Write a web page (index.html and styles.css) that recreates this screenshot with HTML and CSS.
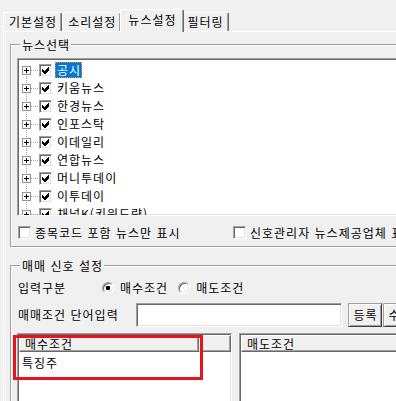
FILE: index.html
```html
<!DOCTYPE html>
<html lang="ko">
  <head>
    <meta charset="utf-8" />
    <title>뉴스설정</title>
<link rel="stylesheet" href="styles.css">
  </head>
  <body>
    <div class="tab-strip">
      <div class="tab">기본설정</div>
      <div class="tab">소리설정</div>
      <div class="tab selected">뉴스설정</div>
      <div class="tab">필터링</div>
    </div>
    <div class="tab-page">
      <div class="group news-group">
        <div class="group-title">뉴스선택</div>
        <div class="tree">
          <div class="tree-row"><span class="expander"></span><span class="dots"></span><span class="check"><svg width="7" height="7" viewBox="0 0 7 7"><path d="M0 2l2 2 4-4h1v3l-4 4h-1l-2-2z"/></svg></span><span class="tree-label selected">공시</span></div>
          <div class="tree-row"><span class="expander"></span><span class="dots"></span><span class="check"><svg width="7" height="7" viewBox="0 0 7 7"><path d="M0 2l2 2 4-4h1v3l-4 4h-1l-2-2z"/></svg></span><span class="tree-label">키움뉴스</span></div>
          <div class="tree-row"><span class="expander"></span><span class="dots"></span><span class="check"><svg width="7" height="7" viewBox="0 0 7 7"><path d="M0 2l2 2 4-4h1v3l-4 4h-1l-2-2z"/></svg></span><span class="tree-label">한경뉴스</span></div>
          <div class="tree-row"><span class="expander"></span><span class="dots"></span><span class="check"><svg width="7" height="7" viewBox="0 0 7 7"><path d="M0 2l2 2 4-4h1v3l-4 4h-1l-2-2z"/></svg></span><span class="tree-label">인포스탁</span></div>
          <div class="tree-row"><span class="expander"></span><span class="dots"></span><span class="check"><svg width="7" height="7" viewBox="0 0 7 7"><path d="M0 2l2 2 4-4h1v3l-4 4h-1l-2-2z"/></svg></span><span class="tree-label">이데일리</span></div>
          <div class="tree-row"><span class="expander"></span><span class="dots"></span><span class="check"><svg width="7" height="7" viewBox="0 0 7 7"><path d="M0 2l2 2 4-4h1v3l-4 4h-1l-2-2z"/></svg></span><span class="tree-label">연합뉴스</span></div>
          <div class="tree-row"><span class="expander"></span><span class="dots"></span><span class="check"><svg width="7" height="7" viewBox="0 0 7 7"><path d="M0 2l2 2 4-4h1v3l-4 4h-1l-2-2z"/></svg></span><span class="tree-label">머니투데이</span></div>
          <div class="tree-row"><span class="expander"></span><span class="dots"></span><span class="check"><svg width="7" height="7" viewBox="0 0 7 7"><path d="M0 2l2 2 4-4h1v3l-4 4h-1l-2-2z"/></svg></span><span class="tree-label">이투데이</span></div>
          <div class="tree-row"><span class="expander"></span><span class="dots"></span><span class="check"><svg width="7" height="7" viewBox="0 0 7 7"><path d="M0 2l2 2 4-4h1v3l-4 4h-1l-2-2z"/></svg></span><span class="tree-label">채널K(키워드량)</span></div>
        </div>
        <div class="option-row">
          <label class="option first"><span class="check"></span>종목코드 포함 뉴스만 표시</label>
          <label class="option"><span class="check"></span>신호관리자 뉴스제공업체 표시</label>
        </div>
      </div>

      <div class="group signal-group">
        <div class="group-title">매매 신호 설정</div>
        <div class="form-row">
          <span class="form-label type-label">입력구분</span>
          <span class="radio on"></span><span class="radio-text">매수조건</span>
          <span class="radio second"></span><span class="radio-text">매도조건</span>
        </div>
        <div class="form-row input-row">
          <span class="form-label word-label">매매조건 단어입력</span>
          <span class="text-input"></span>
          <span class="btn">등록</span>
          <span class="btn next">수정</span>
        </div>
        <div class="lists">
          <div class="listview buy">
            <div class="lv-header"><span class="lv-col">매수조건</span><span class="lv-fill"></span></div>
            <div class="lv-item">특징주</div>
            <div class="highlight-box"></div>
          </div>
          <div class="listview sell">
            <div class="lv-header"><span class="lv-col">매도조건</span><span class="lv-fill"></span></div>
          </div>
        </div>
      </div>
    </div>
  </body>
</html>
```

FILE: styles.css
```css
:root {
    --face: #f0f0f0;
    --light: #ffffff;
    --light-2: #e3e3e3;
    --shadow: #a0a0a0;
    --dark-shadow: #696969;
    --selected: #0078d7;
    --mark-red: #e8141c;
}
html, body {
    margin: 0;
    padding: 0;
    background: var(--face);
}
body {
    width: 396px;
    height: 401px;
    overflow: hidden;
    color: #000;
    font-family: "Noto Sans CJK KR", "Noto Sans", sans-serif;
    font-size: 12px;
    line-height: 14px;
    letter-spacing: 1px;
}

/* tabs */
.tab-strip {
    display: flex;
    align-items: flex-end;
    height: 31px;
    padding-left: 3px;
}
.tab {
    box-sizing: border-box;
    height: 19px;
    padding: 0 4px 0 5px;
    border-left: 1px solid var(--light);
    border-top: 1px solid var(--light);
    border-right: 1px solid var(--dark-shadow);
    border-radius: 2px 2px 0 0;
    box-shadow: inset -1px 0 var(--shadow);
    line-height: 17px;
    white-space: nowrap;
}
.tab.selected {
    height: 23px;
    margin: 0 -2px -1px -1px;
    padding: 0 6px 0 7px;
    background: var(--face);
    line-height: 19px;
    z-index: 1;
}

.tab-page {
    width: 470px;
    margin-left: 3px;
    padding-left: 6px;
    border-top: 1px solid var(--light);
    border-left: 1px solid var(--light);
}

/* group boxes */
.group {
    border: 1px solid var(--shadow);
    box-shadow: inset 1px 1px var(--light), 1px 1px var(--light);
    padding: 0 0 7px 6px;
}
.news-group {
    margin-top: 12px;
}
.signal-group {
    margin-top: 18px;
    height: 200px;
}
.group-title {
    width: fit-content;
    margin: -7px 0 0 3px;
    padding: 0 1px 0 2px;
    background: var(--face);
    line-height: 13px;
    white-space: nowrap;
}

/* sunken controls */
.tree, .listview, .text-input, .check, .radio {
    box-sizing: border-box;
    background-color: #fff;
    border: 1px solid;
    border-color: var(--shadow) var(--light) var(--light) var(--shadow);
    box-shadow: inset 1px 1px var(--dark-shadow), inset -1px -1px var(--light-2);
}

.tree {
    height: 158px;
    margin-top: 7px;
    padding: 2px 0 0 4px;
    overflow: hidden;
    background: repeating-linear-gradient(var(--shadow) 0 1px, transparent 1px 2px) 8px 11px / 1px 100% no-repeat #fff;
}
.tree-row {
    display: flex;
    align-items: center;
    height: 18px;
    white-space: nowrap;
}
.expander {
    flex-shrink: 0;
    box-sizing: border-box;
    width: 9px;
    height: 9px;
    border: 1px solid #919191;
    background:
        linear-gradient(#000, #000) center / 5px 1px no-repeat,
        linear-gradient(#000, #000) center / 1px 5px no-repeat,
        #fff;
}
.dots {
    flex-shrink: 0;
    width: 7px;
    height: 1px;
    margin-right: 1px;
    background: repeating-linear-gradient(to right, var(--shadow) 0 1px, transparent 1px 2px);
}
.check {
    flex-shrink: 0;
    display: flex;
    align-items: center;
    justify-content: center;
    width: 13px;
    height: 13px;
}
.check svg {
    display: block;
    fill: #000;
    shape-rendering: crispEdges;
}
.tree-label {
    margin-left: 3px;
    padding: 0 1px 0 2px;
    line-height: 16px;
}
.tree-label.selected {
    background: var(--selected);
    color: #fff;
    outline: 1px dotted #e8892c;
    outline-offset: -1px;
}

.option-row {
    display: flex;
    align-items: center;
    height: 13px;
    margin-top: 10px;
    padding-left: 1px;
    line-height: 13px;
    white-space: nowrap;
}
.option {
    display: flex;
    align-items: center;
    gap: 4px;
}
.option.first {
    width: 215px;
    flex-shrink: 0;
}

/* signal settings */
.form-row {
    display: flex;
    align-items: center;
    height: 14px;
    margin-top: 9px;
    padding-left: 1px;
    white-space: nowrap;
}
.input-row {
    height: 24px;
    margin-top: 8px;
}
.form-label {
    flex-shrink: 0;
}
.type-label {
    width: 84px;
}
.word-label {
    width: 118px;
}
.radio {
    flex-shrink: 0;
    width: 12px;
    height: 12px;
    border-radius: 50%;
}
.radio.on {
    background: radial-gradient(circle, #000 0 2px, #fff 2.6px);
}
.radio.second {
    margin-left: 10px;
}
.radio-text {
    margin-left: 6px;
}
.text-input {
    flex-shrink: 0;
    width: 206px;
    height: 24px;
}
.btn {
    flex-shrink: 0;
    box-sizing: border-box;
    width: 34px;
    height: 24px;
    margin-left: 6px;
    padding-left: 1px;
    border: 1px solid;
    border-color: var(--shadow) #404040 #404040 var(--shadow);
    box-shadow: inset 1px 1px var(--light), inset -1px -1px var(--shadow);
    text-align: center;
    line-height: 22px;
}
.btn.next {
    margin-left: 1px;
}

.lists {
    display: flex;
    gap: 7px;
    margin-top: 6px;
}
.listview {
    position: relative;
    flex-shrink: 0;
    height: 80px;
    padding: 1px 0 0 1px;
}
.listview.buy {
    width: 215px;
}
.listview.sell {
    width: 200px;
}
.lv-header {
    display: flex;
    height: 17px;
    line-height: 15px;
}
.lv-col, .lv-fill {
    box-sizing: border-box;
    background: var(--face);
    border: 1px solid;
    border-color: var(--light) var(--dark-shadow) var(--dark-shadow) var(--light);
    box-shadow: inset -1px -1px var(--shadow);
}
.lv-col {
    width: 180px;
    padding-left: 5px;
}
.lv-fill {
    flex: 1;
}
.lv-item {
    padding: 2px 0 0 3px;
    line-height: 18px;
}
.highlight-box {
    position: absolute;
    left: -5px;
    top: 1px;
    box-sizing: border-box;
    width: 190px;
    height: 45px;
    border: 3px solid var(--mark-red);
}
```
